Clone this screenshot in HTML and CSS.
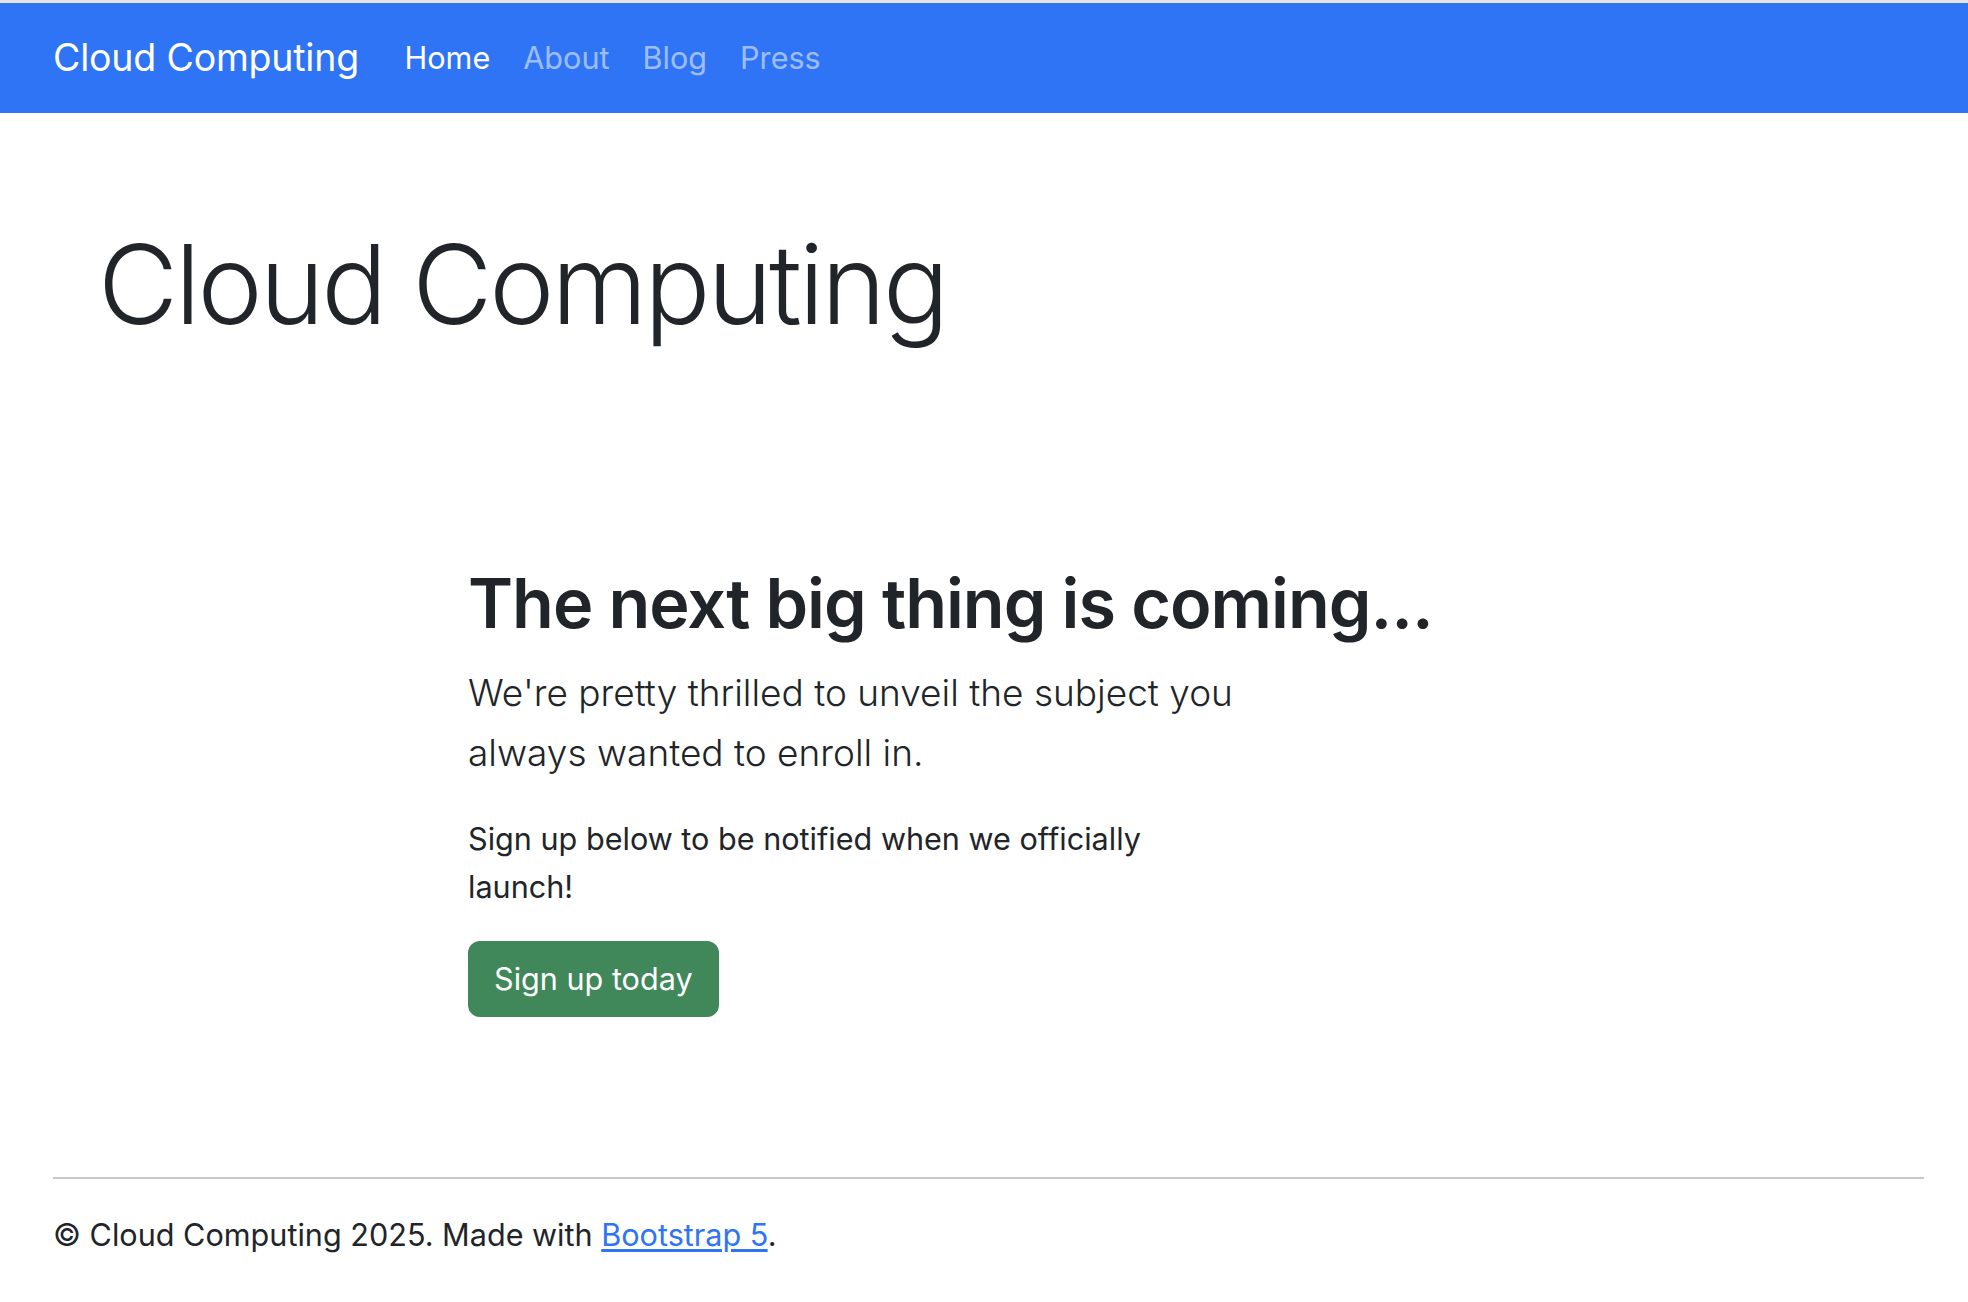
FILE: index.html
```html
<!DOCTYPE html>
<html lang="en">
<head>
<meta charset="utf-8">
<title>Cloud Computing</title>
<link rel="stylesheet" href="styles.css">
</head>
<body>
<header class="topbar">
  <nav class="navbar">
    <a class="brand" href="#">Cloud Computing</a>
    <ul class="nav-links">
      <li><a class="nav-link active" href="#">Home</a></li>
      <li><a class="nav-link" href="#">About</a></li>
      <li><a class="nav-link" href="#">Blog</a></li>
      <li><a class="nav-link" href="#">Press</a></li>
    </ul>
  </nav>
</header>
<main>
  <section class="hero">
    <h1 class="display">Cloud Computing</h1>
  </section>
  <section class="pitch">
    <h2 class="pitch-title">The next big thing is coming...</h2>
    <p class="lead">We're pretty thrilled to unveil the subject you always wanted to enroll in.</p>
    <p class="note">Sign up below to be notified when we officially launch!</p>
    <a class="btn-signup" href="#">Sign up today</a>
  </section>
</main>
<footer class="footer">
  <hr class="rule">
  <p class="copy">© Cloud Computing 2025. Made with <a class="link" href="#">Bootstrap 5</a>.</p>
</footer>
</body>
</html>
```
FILE: styles.css
```css
* { box-sizing: border-box; }
html, body { margin: 0; padding: 0; }
body {
  font-family: Inter, "Noto Sans", "Liberation Sans", sans-serif;
  color: #212529;
  background: #fff;
  border-top: 3px solid #e6e6e6;
  font-size: 30.6px;
  line-height: 48px;
}
.navbar {
  height: 110px;
  background: #2f74f5;
  display: flex;
  align-items: center;
  padding-left: 53px;
}
.brand {
  color: #fff;
  text-decoration: none;
  font-size: 37.5px;
  line-height: 60px;
  margin-right: 29px;
  letter-spacing: -0.2px;
}
.nav-links {
  list-style: none;
  margin: 0;
  padding: 0;
  display: flex;
}
.nav-link {
  display: block;
  padding: 0 16.5px;
  color: rgba(255,255,255,0.55);
  text-decoration: none;
  font-size: 30.6px;
  line-height: 48px;
}
.nav-link.active { color: #fff; }

.hero { padding: 104px 0 0 98px; }
.display {
  margin: 0;
  font-size: 110px;
  line-height: 134px;
  font-weight: 300;
  letter-spacing: -3.1px;
}
.pitch { padding-left: 468px; margin-top: 210px; }
.pitch-title {
  margin: 0 0 18px;
  font-size: 68.3px;
  line-height: 84px;
  font-weight: 600;
  letter-spacing: -1px;
}
.lead {
  margin: 0 0 32px;
  max-width: 800px;
  font-size: 37px;
  line-height: 60px;
  font-weight: 300;
}
.note {
  margin: 0 0 30px;
  max-width: 720px;
}
.btn-signup {
  display: inline-block;
  background: #40875a;
  border: 2px solid #40875a;
  color: #fff;
  text-decoration: none;
  padding: 12px 24px;
  border-radius: 12px;
  line-height: 48px;
}
.footer { margin-top: 160px; padding: 0 44px 0 53px; }
.rule {
  margin: 0 0 32px;
  border: 0;
  border-top: 2px solid #c8c8c8;
}
.copy { margin: 0; }
.link { color: #2f74f5; text-underline-offset: 3px; }
```
